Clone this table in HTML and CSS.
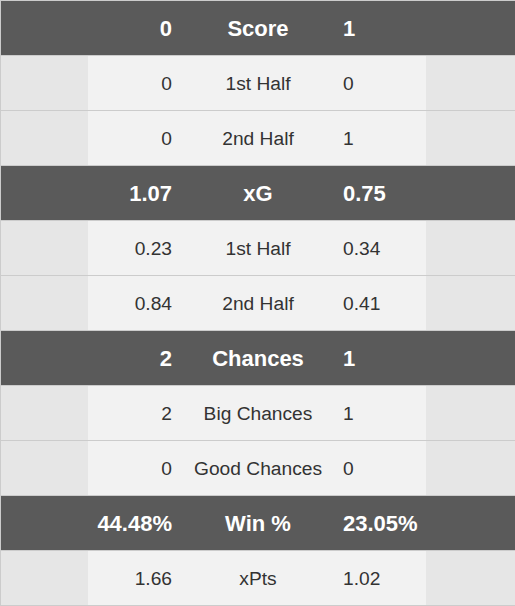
FILE: index.html
```html
<!DOCTYPE html>
<html>
<head>
<meta charset="utf-8">
<link rel="stylesheet" href="styles.css">
</head>
<body>
<div class="table">
  <div class="row head"><div class="pad"></div><div class="l">0</div><div class="m">Score</div><div class="r">1</div><div class="pad"></div></div>
  <div class="row sub"><div class="pad"></div><div class="l">0</div><div class="m">1st Half</div><div class="r">0</div><div class="pad"></div></div>
  <div class="row sub"><div class="pad"></div><div class="l">0</div><div class="m">2nd Half</div><div class="r">1</div><div class="pad"></div></div>
  <div class="row head"><div class="pad"></div><div class="l">1.07</div><div class="m">xG</div><div class="r">0.75</div><div class="pad"></div></div>
  <div class="row sub"><div class="pad"></div><div class="l">0.23</div><div class="m">1st Half</div><div class="r">0.34</div><div class="pad"></div></div>
  <div class="row sub"><div class="pad"></div><div class="l">0.84</div><div class="m">2nd Half</div><div class="r">0.41</div><div class="pad"></div></div>
  <div class="row head"><div class="pad"></div><div class="l">2</div><div class="m">Chances</div><div class="r">1</div><div class="pad"></div></div>
  <div class="row sub"><div class="pad"></div><div class="l">2</div><div class="m">Big Chances</div><div class="r">1</div><div class="pad"></div></div>
  <div class="row sub"><div class="pad"></div><div class="l">0</div><div class="m">Good Chances</div><div class="r">0</div><div class="pad"></div></div>
  <div class="row head"><div class="pad"></div><div class="l">44.48%</div><div class="m">Win %</div><div class="r">23.05%</div><div class="pad"></div></div>
  <div class="row sub"><div class="pad"></div><div class="l">1.66</div><div class="m">xPts</div><div class="r">1.02</div><div class="pad"></div></div>
</div>
</body>
</html>
```
FILE: styles.css
```css
html, body {
  margin: 0;
  padding: 0;
  background: #ffffff;
}
.table {
  width: 515px;
  box-sizing: border-box;
  border-top: 1px solid #cccccc;
  border-left: 1px solid #cccccc;
  font-family: "Liberation Sans", Arial, sans-serif;
}
.row {
  display: grid;
  grid-template-columns: 87px 94px 152px 92px 89px;
  height: 55px;
  box-sizing: border-box;
  border-bottom: 1px solid #cccccc;
}
.row > div {
  display: flex;
  align-items: center;
  padding-top: 2px;
  box-sizing: border-box;
}
.l { justify-content: flex-end; padding-right: 10px; }
.m { justify-content: center; }
.r { justify-content: flex-start; padding-left: 9px; }
.head {
  background: #5a5a5a;
  color: #ffffff;
  font-weight: bold;
  font-size: 22px;
}
.sub {
  background: #f2f2f2;
  color: #333333;
  font-size: 19.2px;
}
.sub .pad {
  background: #e6e6e6;
}
```
